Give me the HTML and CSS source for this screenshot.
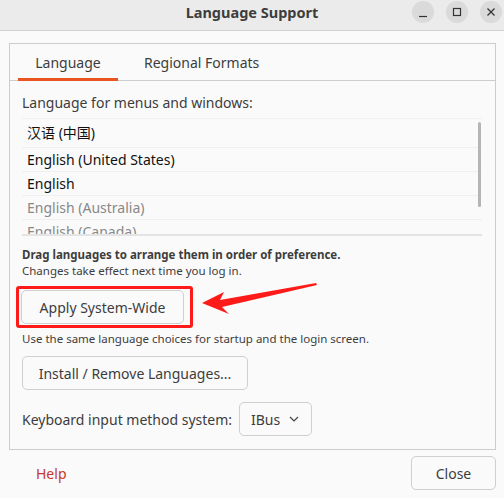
FILE: index.html
```html
<!DOCTYPE html>
<html>
<head>
<meta charset="utf-8">
<link rel="stylesheet" href="styles.css">
</head>
<body>
<div class="window">
  <div class="titlebar">
    <div class="title">Language Support</div>
    <div class="controls">
      <span class="ctl"><svg width="12" height="12" viewBox="0 0 12 12"><path d="M2 10.5h8" stroke="#333" stroke-width="1.2"/></svg></span>
      <span class="ctl"><svg width="12" height="12" viewBox="0 0 12 12"><rect x="2.5" y="2.5" width="7" height="7" fill="none" stroke="#333" stroke-width="1.2"/></svg></span>
      <span class="ctl"><svg width="12" height="12" viewBox="0 0 12 12"><path d="M2.5 2.5l7 7M9.5 2.5l-7 7" stroke="#333" stroke-width="1.3"/></svg></span>
    </div>
  </div>
  <div class="content">
    <div class="notebook">
      <div class="tabs">
        <div class="tab active">Language</div>
        <div class="tab">Regional Formats</div>
      </div>
      <div class="page">
        <div class="label">Language for menus and windows:</div>
        <div class="list">
          <div class="row">汉语 (中国)</div>
          <div class="row">English (United States)</div>
          <div class="row">English</div>
          <div class="row dim">English (Australia)</div>
          <div class="row dim">English (Canada)</div>
          <div class="scrollbar"></div>
        </div>
        <div class="hint-bold">Drag languages to arrange them in order of preference.</div>
        <div class="hint">Changes take effect next time you log in.</div>
        <div class="apply-wrap">
          <div class="highlight">
            <button class="btn apply">Apply System-Wide</button>
          </div>
          <svg class="arrow" width="130" height="40" viewBox="0 0 130 40">
            <path d="M0 20 L22 9 L18 17 L114 0 L115 2 L20 24 L27 31 Z" fill="#ff1a1a"/>
          </svg>
        </div>
        <div class="hint">Use the same language choices for startup and the login screen.</div>
        <button class="btn install">Install / Remove Languages...</button>
        <div class="kbd">
          <span>Keyboard input method system:</span>
          <button class="btn combo">IBus <svg width="12" height="8" viewBox="0 0 12 8"><path d="M2 2l4 4 4-4" fill="none" stroke="#444" stroke-width="1.2"/></svg></button>
        </div>
      </div>
    </div>
    <div class="footer">
      <span class="help">Help</span>
      <button class="btn close">Close</button>
    </div>
  </div>
</div>
</body>
</html>
```
FILE: styles.css
```css
* { box-sizing: border-box; }
html, body { margin: 0; padding: 0; }
body {
  width: 504px; height: 498px; overflow: hidden;
  font-family: "Noto Sans", "Noto Sans CJK SC", sans-serif;
  font-size: 14px; color: #3d3d3d; background: #fafafa;
}
.window { width: 504px; height: 498px; display: flex; flex-direction: column; }
.titlebar {
  height: 31px; background: #ebebeb; border-bottom: 1px solid #d2d2d2;
  position: relative; display: flex; align-items: center; justify-content: center;
}
.title { font-weight: bold; font-size: 14.5px; color: #3d3d3d; margin-top: -6px; }
.controls { position: absolute; right: 2px; top: 1px; display: flex; gap: 12px; }
.ctl {
  width: 22px; height: 22px; border-radius: 50%; background: #dadada;
  display: flex; align-items: center; justify-content: center;
}
.content { padding: 12px 8px 0 9px; flex: 1; }
.notebook {
  border: 1px solid #cdcdcd; height: 407px; display: flex; flex-direction: column;
  background: #fafafa;
}
.tabs { display: flex; height: 37px; border-bottom: 1px solid #cdcdcd; padding-left: 8px; }
.tab {
  padding: 0 18px; display: flex; align-items: center; color: #3d3d3d;
  height: 37px; margin-bottom: -1px; border-bottom: 3px solid transparent; padding-top: 2px;
}
.tab.active { border-bottom-color: #e95420; width: 100px; justify-content: center; }
.tab + .tab { margin-left: 8px; }
.page { padding: 12px 12px 0 12px; }
.label { height: 20px; line-height: 20px; }
.list {
  position: relative; margin-top: 5px; margin-right: 1px; height: 118px; overflow: hidden;
  border-top: 1px solid #f0f0f0; border-bottom: 2px solid #e4e4e4; background: #fafafa;
}
.row {
  height: 24px; line-height: 24px; padding-left: 5px; color: #111;
  border-bottom: 1px solid #efefef;
}
.row:first-child { height: 29px; line-height: 28px; }
.row.dim { color: #888; }
.scrollbar {
  position: absolute; right: 1px; top: 3px; width: 3px; height: 85px;
  background: #b5b5b5; border-radius: 2px;
}
.hint-bold { font-weight: bold; font-size: 11.5px; margin-top: 11px; line-height: 16px; }
.hint { font-size: 11.5px; line-height: 16px; }
.apply-wrap { position: relative; height: 45px; margin-top: 7px; margin-left: -6px; }
.highlight {
  width: 177px; height: 42px; border: 3px solid #ff1a1a; border-radius: 3px;
  padding: 1px 0 0 2px;
}
.arrow { position: absolute; left: 186px; top: -3px; }
.btn {
  font-family: inherit; font-size: 14px; color: #3d3d3d; background: #fafafa;
  border: 1px solid #cfcfcf; border-radius: 5px; cursor: default;
}
.apply { width: 163px; height: 34px; }
.install { width: 226px; height: 34px; margin-top: 9px; display: block; }
.kbd { display: flex; align-items: center; gap: 7px; margin-top: 12px; }
.combo { width: 73px; height: 34px; display: flex; align-items: center; justify-content: center; gap: 8px; }
.footer { display: flex; justify-content: space-between; align-items: center; padding-top: 6px; }
.help { color: #c7362a; margin-left: 27px; }
.close { width: 85px; height: 34px; }
```
